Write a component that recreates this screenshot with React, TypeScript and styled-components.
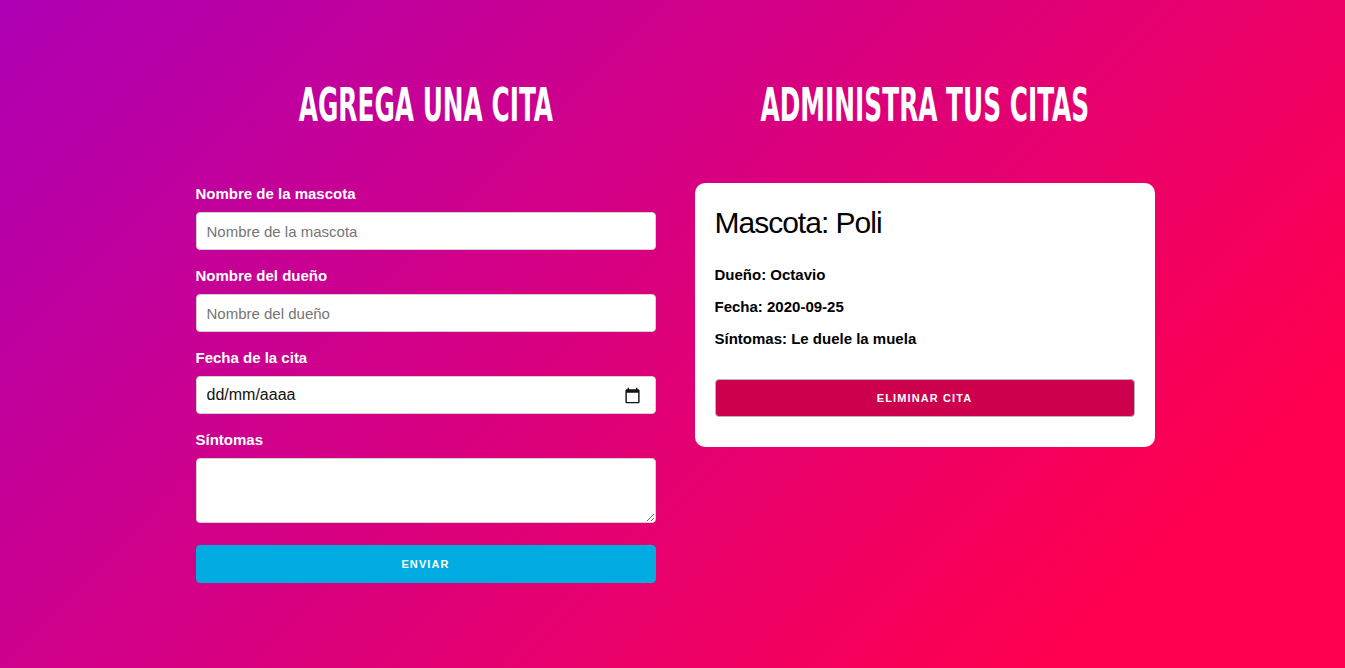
import React from 'react';
import styled, { createGlobalStyle } from 'styled-components';

const GlobalStyle = createGlobalStyle`
  html, body {
    margin: 0;
    padding: 0;
    min-height: 100%;
  }
  body {
    font-family: "Liberation Sans", Arial, sans-serif;
    font-size: 15px;
    line-height: 1.6;
    color: #222;
    background: linear-gradient(135deg, #ae00b4 0%, #ff0050 85%);
    background-attachment: fixed;
    min-height: 100vh;
  }
  * {
    box-sizing: border-box;
  }
`;

const Page = styled.div`
  min-height: 100vh;
  padding: 80px 0 40px 6px;
  display: flex;
  justify-content: center;
`;

const Row = styled.div`
  width: 960px;
  display: grid;
  grid-template-columns: 460px 460px;
  column-gap: 39px;
`;

const Column = styled.div`
  display: flex;
  flex-direction: column;
`;

// condensed display face is not installed, so squeeze DejaVu Condensed
const Heading = styled.h2`
  margin: 0 0 52px;
  height: 50px;
  display: flex;
  justify-content: center;
  align-items: center;
  white-space: nowrap;
  color: #fff;
  font-family: "DejaVu Sans Condensed", "DejaVu Sans", sans-serif;
  font-weight: 700;
  font-size: 46px;
  line-height: 50px;
  text-transform: uppercase;

  span {
    display: inline-block;
    transform: scaleX(0.6);
    transform-origin: center;
  }
`;

const Form = styled.form`
  display: flex;
  flex-direction: column;
`;

const Label = styled.label`
  display: block;
  color: #fff;
  font-weight: 700;
  font-size: 15px;
  line-height: 24px;
  margin-bottom: 6px;
`;

const Input = styled.input`
  width: 100%;
  height: 38px;
  padding: 6px 10px;
  margin-bottom: 14px;
  background: #fff;
  border: 1px solid #d1d1d1;
  border-radius: 4px;
  font-family: "Liberation Sans", Arial, sans-serif;
  font-size: 15px;
  color: #222;
  outline: none;

  &::placeholder {
    color: #757575;
  }
`;

const DateField = styled.div`
  display: flex;
  align-items: center;
  height: 38px;
  padding: 0 14px 0 10px;
  margin-bottom: 14px;
  background: #fff;
  border: 1px solid #d1d1d1;
  border-radius: 4px;
`;

const DateInput = styled.input`
  flex: 1;
  border: none;
  outline: none;
  padding: 0;
  background: transparent;
  font-family: "Liberation Sans", Arial, sans-serif;
  font-size: 16px;
  color: #111;

  &::placeholder {
    color: #111;
  }
`;

const CalendarIcon = styled.svg`
  width: 17px;
  height: 17px;
  flex-shrink: 0;
`;

const TextArea = styled.textarea`
  display: block;
  width: 100%;
  height: 65px;
  padding: 6px 10px;
  margin: 0 0 22px;
  background: #fff;
  border: 1px solid #d1d1d1;
  border-radius: 4px;
  font-family: "Liberation Sans", Arial, sans-serif;
  font-size: 15px;
  resize: vertical;
  outline: none;
`;

const Button = styled.button<{ $variant: 'send' | 'delete' }>`
  display: block;
  width: 100%;
  height: 38px;
  padding: 0 30px;
  border-radius: 4px;
  border: 1px solid ${(p) => (p.$variant === 'send' ? '#00abe1' : '#b5b5b5')};
  background: ${(p) => (p.$variant === 'send' ? '#00abe1' : '#cc004c')};
  color: #fff;
  font-family: "Liberation Sans", Arial, sans-serif;
  font-size: 11px;
  font-weight: 700;
  letter-spacing: 1.1px;
  text-transform: uppercase;
  cursor: pointer;
`;

const Card = styled.div`
  margin-top: 1px;
  background: #fff;
  border-radius: 10px;
  padding: 20px 20px 30px;
`;

const PetName = styled.h3`
  margin: 0 0 21px;
  font-size: 30px;
  line-height: 39px;
  font-weight: 400;
  letter-spacing: -1px;
  color: #000;
`;

const Detail = styled.p`
  margin: 0 0 8px;
  font-size: 15px;
  line-height: 24px;
  font-weight: 700;
  color: #000;

  &:last-of-type {
    margin-bottom: 28px;
  }
`;

const App: React.FC = () => {
  return (
    <>
      <GlobalStyle />
      <Page>
        <Row>
          <Column>
            <Heading><span>Agrega una cita</span></Heading>
            <Form onSubmit={(e) => e.preventDefault()}>
              <Label htmlFor="mascota">Nombre de la mascota</Label>
              <Input id="mascota" type="text" placeholder="Nombre de la mascota" />

              <Label htmlFor="propietario">Nombre del dueño</Label>
              <Input id="propietario" type="text" placeholder="Nombre del dueño" />

              <Label htmlFor="fecha">Fecha de la cita</Label>
              <DateField>
                <DateInput id="fecha" type="text" placeholder="dd/mm/aaaa" />
                <CalendarIcon viewBox="0 0 24 24" aria-hidden="true">
                  <path
                    fill="#111"
                    d="M20 3h-1V1h-2v2H7V1H5v2H4c-1.1 0-2 .9-2 2v16c0 1.1.9 2 2 2h16c1.1 0 2-.9 2-2V5c0-1.1-.9-2-2-2zm0 18H4V8h16v13z"
                  />
                </CalendarIcon>
              </DateField>

              <Label htmlFor="sintomas">Síntomas</Label>
              <TextArea id="sintomas" />

              <Button type="submit" $variant="send">Enviar</Button>
            </Form>
          </Column>

          <Column>
            <Heading><span>Administra tus citas</span></Heading>
            <Card>
              <PetName>Mascota: Poli</PetName>
              <Detail>Dueño: Octavio</Detail>
              <Detail>Fecha: 2020-09-25</Detail>
              <Detail>Síntomas: Le duele la muela</Detail>
              <Button type="button" $variant="delete">Eliminar cita</Button>
            </Card>
          </Column>
        </Row>
      </Page>
    </>
  );
};

export default App;
